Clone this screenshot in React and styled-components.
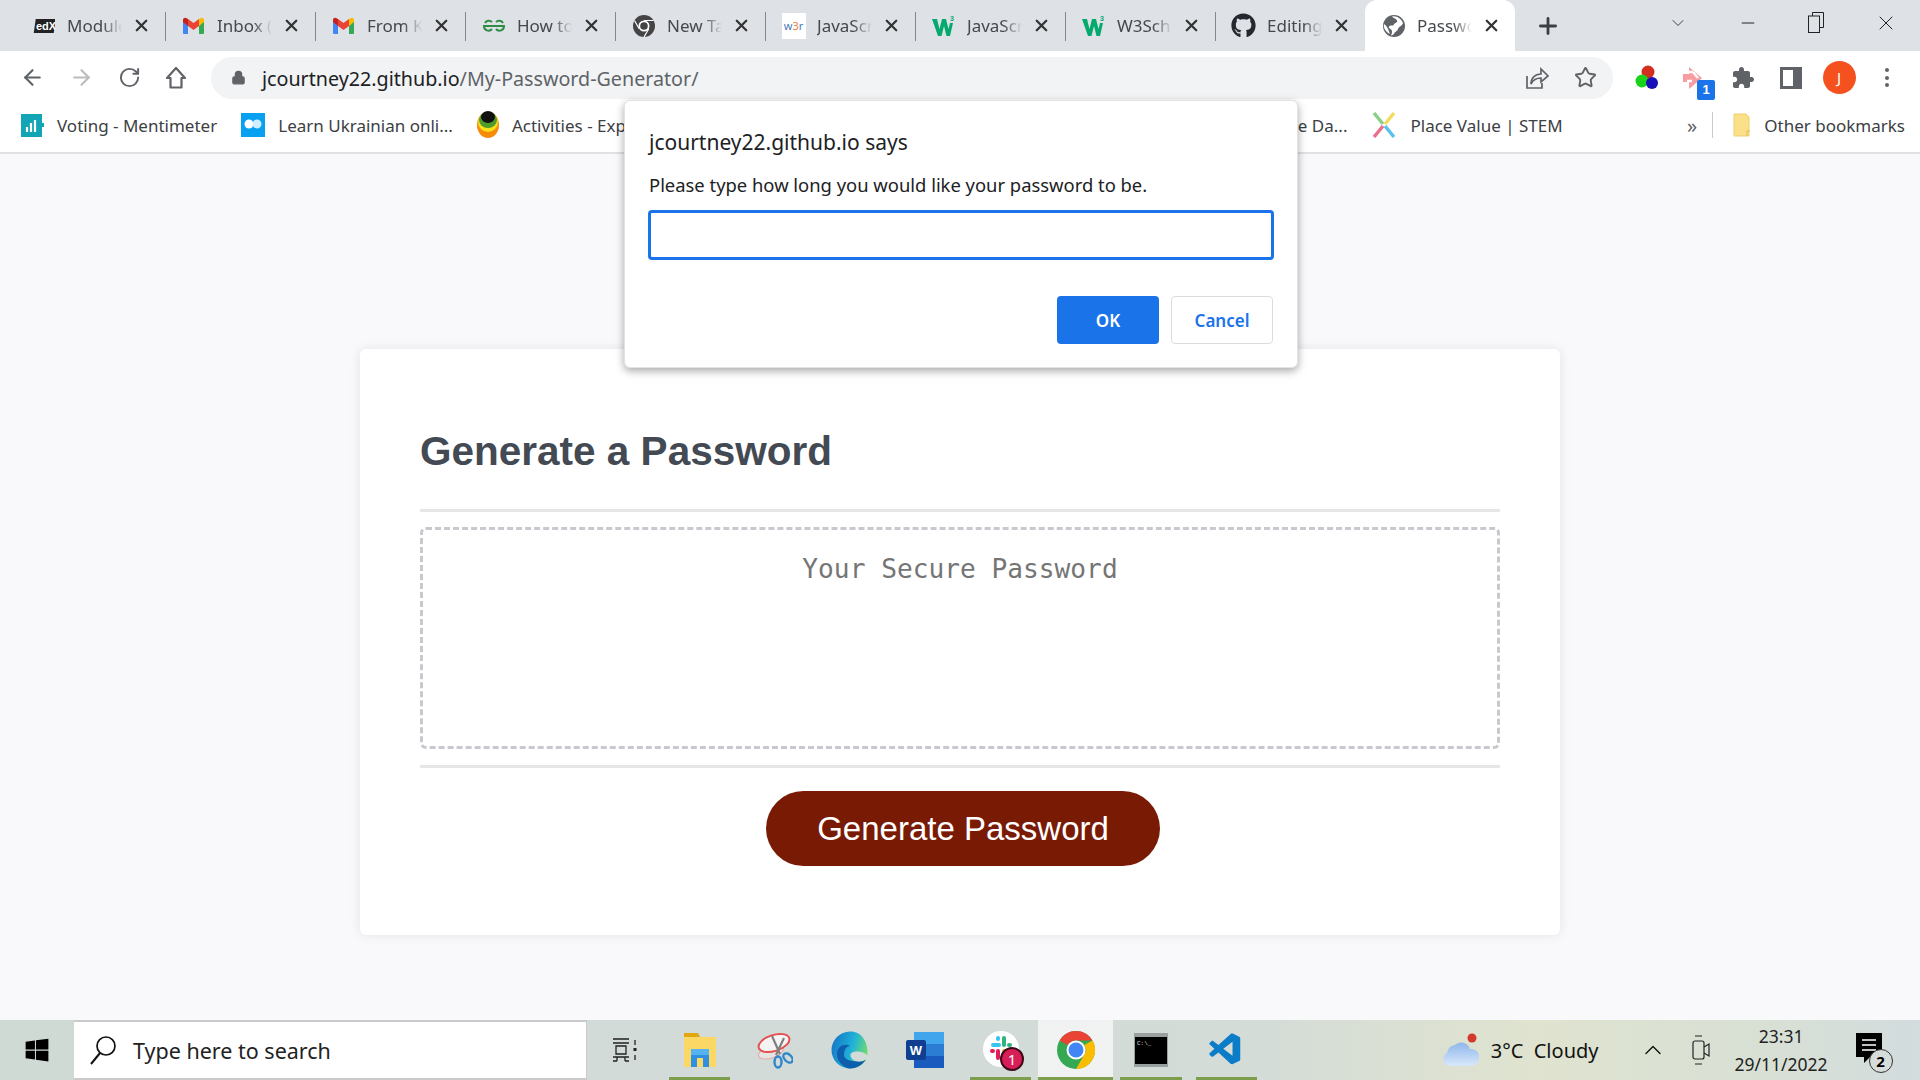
import React from "react";
import styled, { createGlobalStyle } from "styled-components";
import { FaGithub, FaWindows } from "react-icons/fa";
import { VscVscode } from "react-icons/vsc";
import { ArrowLeft, ArrowRight, RotateCw, Lock, Star, Plus, X, Minus, ChevronDown, ChevronUp } from "lucide-react";

const UI_FONT = `"Noto Sans", "Open Sans", sans-serif`;

const Global = createGlobalStyle`
  html, body { margin: 0; padding: 0; background: #f9f9fc; }
  * { box-sizing: border-box; }
`;

// --- small drawn icons ---
const EdxIcon = () => (
  <svg width="22" height="18" viewBox="0 0 22 18">
    <rect x="1" y="2" width="20" height="14" fill="#222" transform="skewX(-8) translate(2 0)" />
    <text x="3" y="13" fontSize="11" fontWeight="700" fill="#fff" fontFamily="Liberation Sans">edX</text>
  </svg>
);
const GmailIcon = () => (
  <svg width="23" height="18" viewBox="0 0 23 18">
    <path d="M1 4v12a1 1 0 0 0 1 1h4V8z" fill="#4285f4" />
    <path d="M22 4v12a1 1 0 0 1-1 1h-4V8z" fill="#34a853" />
    <path d="M17 2v7l5-4V3c0-2-2.4-3-4-1.500z" fill="#fbbc04" />
    <path d="M6 2v7l5.500 4L17 9V2l-5.500 4z" fill="#ea4335" />
    <path d="M6 2v7L1 5V3c0-2 2.4-3 4-1.500z" fill="#c5221f" />
  </svg>
);
const GfgIcon = () => (
  <svg width="24" height="14" viewBox="0 0 24 14" fill="none" stroke="#2f8d46" strokeWidth="2">
    <path d="M12 7H2a4.500 4.500 0 0 0 8 3M12 7h10a4.500 4.500 0 0 1-8 3M3 4a4.500 4.500 0 0 1 7-1M21 4a4.500 4.500 0 0 0-7-1" />
  </svg>
);
const ChromeMono = () => (
  <svg width="22" height="22" viewBox="0 0 22 22">
    <circle cx="11" cy="11" r="11" fill="#444" />
    <circle cx="11" cy="11" r="5.5" fill="#fff" />
    <circle cx="11" cy="11" r="3.8" fill="#444" />
    <path d="M11 5.500h9.500M6.200 13.800 1.600 5.800M15.800 13.800 11 22" stroke="#fff" strokeWidth="1.2" />
  </svg>
);
const W3rIcon = () => (
  <W3rBox>w<b>3</b>r</W3rBox>
);
const W3Icon = () => (
  <svg width="24" height="22" viewBox="0 0 24 22">
    <path d="M0 4h5l2.500 10L10 4h4l2.500 10L18 8h3l-3 13h-3.500L12 11l-2.500 10H6z" fill="#04aa6d" />
    <text x="18" y="6" fontSize="7" fontWeight="700" fill="#04aa6d" fontFamily="Liberation Sans">3</text>
  </svg>
);
const GlobeIcon = () => (
  <svg width="22" height="22" viewBox="0 0 22 22">
    <circle cx="11" cy="11" r="11" fill="#5f6368" />
    <path d="M9 1.500c2 2 4 2 5 4s-2 2-3 4-4 0-5 2 3 2 3 5-1 3-1 4c3 0 3-3 5-4s2-4 4-5 2-2 3-3c-1-4-6-8-11-7zM1 9c2 1 3 3 4 5s1 3 2 5C3 17 0 13 1 9z" fill="#fff" />
  </svg>
);
const RestoreIcon = () => (
  <svg width="16" height="21" viewBox="0 0 16 21" fill="none" stroke="#222">
    <path d="M4.500 4V.5h11v15H12" />
    <rect x="0.500" y="4" width="11" height="16.500" />
  </svg>
);
const HomeIcon = () => (
  <svg width="22" height="24" viewBox="0 0 22 24" fill="none" stroke="#5f6368" strokeWidth="2.200" strokeLinejoin="round">
    <path d="M11 2 2 12h3.500v9.500h11V12H20z" />
  </svg>
);
const ShareIcon = () => (
  <svg width="24" height="24" viewBox="0 0 24 24" fill="none" stroke="#5f6368" strokeWidth="1.700">
    <path d="M2 10v12h15v-5" />
    <path d="M6 18c0-6 4-10 10-10V3l7 7-7 6v-4c-4 0-8 2-10 6z" />
  </svg>
);
const PuzzleIcon = () => (
  <svg width="24" height="24" viewBox="0 0 24 24" fill="#5f6368">
    <path d="M20.500 11H19V7c0-1.100-.9-2-2-2h-4V3.500C13 2.120 11.880 1 10.500 1S8 2.120 8 3.500V5H4c-1.100 0-1.990.9-1.990 2v3.800H3.500c1.490 0 2.700 1.210 2.700 2.700s-1.210 2.700-2.700 2.700H2V20c0 1.100.9 2 2 2h3.800v-1.500c0-1.490 1.210-2.700 2.700-2.700 1.490 0 2.700 1.210 2.700 2.700V22H17c1.100 0 2-.9 2-2v-4h1.500c1.380 0 2.500-1.120 2.500-2.500S21.880 11 20.500 11z" />
  </svg>
);
const ColorDots = () => (
  <svg width="24" height="28" viewBox="0 0 24 28">
    <circle cx="13" cy="8" r="6.500" fill="#d32f1f" />
    <circle cx="7" cy="17" r="6.500" fill="#19d219" />
    <circle cx="17" cy="19" r="6" fill="#1a10b8" />
  </svg>
);
const ArrowExt = () => (
  <svg width="28" height="28" viewBox="0 0 28 28">
    <path d="M8 3l13 11-13 11v-7H2v-8h6z" fill="#f79ca0" />
    <path d="M7 8h5M6 17h5M12 8l5 6" stroke="#fff" strokeWidth="2.500" />
  </svg>
);
const SidePanel = () => (
  <svg width="22" height="22" viewBox="0 0 22 22">
    <rect x="1.500" y="1.500" width="19" height="19" fill="none" stroke="#5f6368" strokeWidth="3" />
    <rect x="13" y="2" width="7" height="18" fill="#5f6368" />
  </svg>
);
const MentiIcon = () => (
  <svg width="23" height="23" viewBox="0 0 23 23">
    <rect width="21" height="23" fill="#13a5b5" />
    <rect x="21" y="9" width="2" height="4" fill="#13a5b5" />
    <path d="M6 13v5M10 9v9M14 6v12" stroke="#fff" strokeWidth="2.200" />
  </svg>
);
const BubblesIcon = () => (
  <svg width="24" height="24" viewBox="0 0 24 24">
    <rect width="24" height="24" fill="#08a0f0" />
    <circle cx="8" cy="11" r="4.500" fill="#fff" />
    <circle cx="16" cy="11" r="4.500" fill="#cfeeff" />
  </svg>
);
const LayersIcon = () => (
  <svg width="22" height="28" viewBox="0 0 22 28">
    <ellipse cx="11" cy="14" rx="11" ry="13" fill="#f58a0b" />
    <ellipse cx="11" cy="11" rx="10" ry="10" fill="#f7e11a" />
    <ellipse cx="11" cy="9" rx="9" ry="8" fill="#4f9b2c" />
    <ellipse cx="11" cy="6" rx="7" ry="6" fill="#111" />
  </svg>
);
const StemIcon = () => (
  <svg width="26" height="28" viewBox="0 0 26 28" fill="none" strokeWidth="3.500">
    <path d="M3 2l9 11" stroke="#8ad08a" />
    <path d="M23 2l-9 11" stroke="#f2dc62" />
    <path d="M3 26l9-11" stroke="#ea6f8c" />
    <path d="M23 26l-9-11" stroke="#5cc1ea" />
  </svg>
);
const FolderIcon = () => (
  <svg width="18" height="24" viewBox="0 0 18 24">
    <path d="M1 1h12l3 3v19H1z" fill="#fbe08a" stroke="#f0cf6c" />
    <path d="M14 23v-5h3" fill="none" stroke="#e2b94c" />
  </svg>
);
const SearchGlass = () => (
  <svg width="28" height="30" viewBox="0 0 28 30" fill="none" stroke="#111" strokeWidth="1.700">
    <circle cx="17" cy="11" r="9" />
    <path d="M11 18 2 29" strokeWidth="2" />
  </svg>
);
const TaskViewIcon = () => (
  <svg width="26" height="24" viewBox="0 0 26 24" fill="none" stroke="#222" strokeWidth="1.300">
    <path d="M1 1h16M1 5h16M4 8h10v8H4zM1 19h16M1 23h4M13 23h4M5 19v4M13 19v4M23 2v5M23 17v5" />
    <rect x="21.500" y="10" width="3" height="3" fill="#222" stroke="none" />
  </svg>
);
const ExplorerIcon = () => (
  <svg width="34" height="36" viewBox="0 0 34 36">
    <path d="M1 1h14l2 4H1z" fill="#e2a70f" />
    <path d="M1 5h32v30H1z" fill="#fbd766" />
    <path d="M8 17h18v18h-6v-9h-6v9H8z" fill="#2f8fe0" />
    <path d="M8 17h18v6H8z" fill="#55b3f2" />
  </svg>
);
const SnipIcon = () => (
  <svg width="36" height="38" viewBox="0 0 36 38" fill="none">
    <ellipse cx="14" cy="21" rx="13" ry="6" fill="#e4e4e4" stroke="#e9a8a8" transform="rotate(-18 14 21)" />
    <ellipse cx="17" cy="12" rx="16" ry="8" fill="#f4f4f4" stroke="#e55050" strokeWidth="2" transform="rotate(-18 17 12)" />
    <path d="M15 5l8 18M27 7 19 24" stroke="#808080" strokeWidth="2.200" />
    <ellipse cx="21" cy="31" rx="3.500" ry="5.500" stroke="#2f86cc" strokeWidth="2.400" />
    <ellipse cx="31" cy="27" rx="3.500" ry="5.500" stroke="#2f86cc" strokeWidth="2.400" transform="rotate(-45 31 27)" />
  </svg>
);
const EdgeIcon = () => (
  <svg width="38" height="38" viewBox="0 0 38 38">
    <defs>
      <linearGradient id="edgeA" x1="0" y1="0.300" x2="1" y2="0.600">
        <stop offset="0" stopColor="#1478c8" />
        <stop offset="0.550" stopColor="#1fb1d8" />
        <stop offset="1" stopColor="#74df6a" />
      </linearGradient>
    </defs>
    <path d="M19 .5C9 .5.5 9 .5 19c0 10 8 18.500 18.500 18.500 7 0 13-3.500 16-9-3 2-6 2.500-9 2-4-1-7-4-6.500-7 .5-2 3-3 6-3 6 0 9 2 11 4C37.500 11 31 .5 19 .5z" fill="url(#edgeA)" />
    <path d="M13 24c0-6 3-9 6-9-5-3-13 0-13 8 0 8 7 14.500 13 14.500 6 0 12-3 16-9-3 2-6 2.500-9 2-6-.5-13-1.500-13-6.500z" fill="#0d5fae" />
  </svg>
);
const WordIcon = () => (
  <svg width="38" height="36" viewBox="0 0 38 36">
    <rect x="8" y="0" width="30" height="12" fill="#41a5ee" />
    <rect x="8" y="12" width="30" height="12" fill="#2b7cd3" />
    <rect x="8" y="24" width="30" height="12" fill="#185abd" />
    <rect x="0" y="8" width="20" height="20" rx="2" fill="#103f91" />
    <text x="10" y="23" fontSize="13" fontWeight="700" fill="#fff" textAnchor="middle" fontFamily="Liberation Sans">W</text>
  </svg>
);
const SlackIcon = () => (
  <svg width="36" height="40" viewBox="0 0 36 40">
    <circle cx="18" cy="19" r="18" fill="#fff" />
    <path d="M10 15h6M15 8v1" stroke="#36c5f0" strokeWidth="4" strokeLinecap="round" />
    <path d="M21 8v7M27 15h-1" stroke="#2eb67d" strokeWidth="4" strokeLinecap="round" />
    <path d="M15 21v7M9 21h1" stroke="#e01e5a" strokeWidth="4" strokeLinecap="round" />
    <path d="M21 21h6" stroke="#ecb22e" strokeWidth="4" strokeLinecap="round" />
  </svg>
);
const ChromeColor = () => (
  <svg width="38" height="38" viewBox="0 0 38 38">
    <circle cx="19" cy="19" r="19" fill="#34a853" />
    <path d="M19 0a19 19 0 0 1 16.500 9.500H19a9.500 9.500 0 0 0-8.200 4.800L2.600 9.500A19 19 0 0 1 19 0z" fill="#ea4335" />
    <path d="M35.500 9.500A19 19 0 0 1 19 38l8.200-14.200A9.500 9.500 0 0 0 27.200 14z" fill="#fbbc04" />
    <circle cx="19" cy="19" r="9.500" fill="#fff" />
    <circle cx="19" cy="19" r="7.500" fill="#4285f4" />
  </svg>
);
const TerminalIcon = () => (
  <svg width="34" height="34" viewBox="0 0 34 34">
    <rect width="34" height="34" fill="#9aa0a0" />
    <rect x="1" y="4" width="32" height="27" fill="#000" />
    <text x="3" y="12" fontSize="6" fill="#ddd" fontFamily="Liberation Mono">C:\_</text>
  </svg>
);
const CloudIcon = () => (
  <svg width="38" height="34" viewBox="0 0 38 34">
    <defs>
      <linearGradient id="cloudA" x1="0" y1="0" x2="0" y2="1">
        <stop offset="0" stopColor="#8fb6ea" />
        <stop offset="1" stopColor="#d9e8fb" />
      </linearGradient>
    </defs>
    <path d="M8 33a7 7 0 0 1-2-13 9 9 0 0 1 8-8 9 9 0 0 1 15 4 8.500 8.500 0 0 1 2 17z" fill="url(#cloudA)" />
    <circle cx="31" cy="5" r="4.500" fill="#d23a2d" />
  </svg>
);
const MeetIcon = () => (
  <svg width="18" height="32" viewBox="0 0 18 32" fill="none" stroke="#222" strokeWidth="1.200">
    <rect x="1" y="7" width="11" height="18" rx="2" />
    <path d="M12 13l5-3v12l-5-3M3 2h7M3 30h7" />
  </svg>
);
const NotifyIcon = () => (
  <svg width="26" height="34" viewBox="0 0 26 34">
    <path d="M0 0h26v24H14l-6 6v-6H0z" fill="#000" />
    <path d="M6 7h14M6 12h14M6 17h14" stroke="#fff" strokeWidth="1.500" />
  </svg>
);

// --- data ---
const tabs = [
  { title: "Module", icon: <EdxIcon /> },
  { title: "Inbox (", icon: <GmailIcon /> },
  { title: "From K", icon: <GmailIcon /> },
  { title: "How to", icon: <GfgIcon /> },
  { title: "New Ta", icon: <ChromeMono /> },
  { title: "JavaScr", icon: <W3rIcon /> },
  { title: "JavaScr", icon: <W3Icon /> },
  { title: "W3Sch", icon: <W3Icon /> },
  { title: "Editing", icon: <FaGithub size={25} color="#24292f" /> },
  { title: "Passwo", icon: <GlobeIcon />, active: true },
];

const taskItems = [
  { icon: <TaskViewIcon /> },
  { icon: <ExplorerIcon />, open: true },
  { icon: <SnipIcon /> },
  { icon: <EdgeIcon /> },
  { icon: <WordIcon /> },
  { icon: <SlackIcon />, open: true, badge: "1" },
  { icon: <ChromeColor />, open: true, active: true },
  { icon: <TerminalIcon />, open: true },
  { icon: <VscVscode size={38} color="#0a7cc8" />, open: true },
];

export default function App() {
  return (
    <Screen>
      <Global />
      <TabStrip>
        {tabs.map((t, i) => (
          <Tab key={i} $active={t.active} $last={i >= 8}>
            <TabIcon>{t.icon}</TabIcon>
            <TabTitle>{t.title}</TabTitle>
            <X size={19} strokeWidth={2.8} color="#333" />
          </Tab>
        ))}
        <NewTab><Plus size={26} strokeWidth={2.6} color="#3c4043" /></NewTab>
        <WindowButtons>
          <ChevronDown size={20} strokeWidth={1} color="#222" />
          <Minus size={20} strokeWidth={1.2} color="#222" />
          <RestoreIcon />
          <X size={24} strokeWidth={1} color="#222" />
        </WindowButtons>
      </TabStrip>

      <Toolbar>
        <NavButtons>
          <ArrowLeft size={25} color="#5f6368" strokeWidth={2} />
          <ArrowRight size={25} color="#babcbe" strokeWidth={2} />
          <RotateCw size={23} color="#5f6368" strokeWidth={2} />
          <HomeIcon />
        </NavButtons>
        <AddressBar>
          <Lock size={15} color="#5f6368" fill="#5f6368" />
          <Url>jcourtney22.github.io<UrlPath>/My-Password-Generator/</UrlPath></Url>
          <AddressActions>
            <ShareIcon />
            <Star size={23} color="#5f6368" strokeWidth={2} />
          </AddressActions>
        </AddressBar>
        <Extensions>
          <ColorDots />
          <ExtBadgeWrap>
            <ArrowExt />
            <ExtBadge>1</ExtBadge>
          </ExtBadgeWrap>
          <PuzzleIcon />
          <SidePanel />
          <Avatar>J</Avatar>
          <MenuDots><i /><i /><i /></MenuDots>
        </Extensions>
      </Toolbar>

      <BookmarkBar>
        <Bookmark><MentiIcon />Voting - Mentimeter</Bookmark>
        <Bookmark><BubblesIcon />Learn Ukrainian onli...</Bookmark>
        <Bookmark><LayersIcon />Activities - Explore</Bookmark>
        <CoveredBookmark>The Da...</CoveredBookmark>
        <Bookmark><StemIcon />Place Value | STEM</Bookmark>
        <More>»</More>
        <BookmarkDivider />
        <Bookmark><FolderIcon />Other bookmarks</Bookmark>
      </BookmarkBar>

      <Page>
        <Card>
          <CardHeader>
            <Title>Generate a Password</Title>
          </CardHeader>
          <CardBody>
            <PasswordBox placeholder="Your Secure Password" readOnly />
          </CardBody>
          <CardFooter>
            <GenerateButton>Generate Password</GenerateButton>
          </CardFooter>
        </Card>
      </Page>

      <Taskbar>
        <StartButton><FaWindows size={26} color="#000" /></StartButton>
        <SearchBox>
          <SearchGlass />
          <SearchText>Type here to search</SearchText>
        </SearchBox>
        {taskItems.map((item, i) => (
          <TaskSlot key={i} $open={item.open} $active={item.active}>
            {item.icon}
            {item.badge && <TaskBadge>{item.badge}</TaskBadge>}
          </TaskSlot>
        ))}
        <Tray>
          <Weather><CloudIcon /><span>3°C&nbsp; Cloudy</span></Weather>
          <TraySlot $gap={40}><ChevronUp size={28} strokeWidth={1.2} color="#111" /></TraySlot>
          <TraySlot $gap={25}><MeetIcon /></TraySlot>
          <Clock><span>23:31</span><span>29/11/2022</span></Clock>
          <NotifyWrap>
            <NotifyIcon />
            <NotifyCount>2</NotifyCount>
          </NotifyWrap>
        </Tray>
      </Taskbar>

      <Dialog>
        <DialogTitle>jcourtney22.github.io says</DialogTitle>
        <DialogMessage>Please type how long you would like your password to be.</DialogMessage>
        <DialogInput />
        <DialogActions>
          <OkButton>OK</OkButton>
          <CancelButton>Cancel</CancelButton>
        </DialogActions>
      </Dialog>
    </Screen>
  );
}

const Screen = styled.div`
  position: relative;
  width: 1920px;
  height: 1080px;
  overflow: hidden;
  display: flex;
  flex-direction: column;
  font-family: ${UI_FONT};
  background: #f9f9fc;
`;

const TabStrip = styled.div`
  height: 51px;
  flex: none;
  display: flex;
  align-items: stretch;
  padding-left: 15px;
  background: #dee1e6;
`;

const Tab = styled.div`
  position: relative;
  width: 150px;
  flex: none;
  display: flex;
  align-items: center;
  padding: 0 0 0 16px;
  color: #45484c;
  background: ${(p) => (p.$active ? "#fff" : "transparent")};
  border-radius: ${(p) => (p.$active ? "12px 12px 0 0" : "0")};
  &::after {
    content: "";
    position: absolute;
    right: -1px;
    top: 12px;
    bottom: 10px;
    width: 1px;
    background: ${(p) => (p.$last ? "transparent" : "#84878b")};
  }
`;

const TabIcon = styled.span`
  width: 25px;
  flex: none;
  display: flex;
  justify-content: center;
  align-items: center;
`;

const TabTitle = styled.span`
  width: 60px;
  margin-left: 11px;
  margin-right: 5px;
  flex: none;
  overflow: hidden;
  white-space: nowrap;
  font-size: 17px;
  -webkit-mask-image: linear-gradient(90deg, #000 60%, transparent 92%);
  mask-image: linear-gradient(90deg, #000 60%, transparent 92%);
`;

const W3rBox = styled.span`
  width: 24px;
  height: 26px;
  background: #fff;
  font-size: 11px;
  line-height: 26px;
  text-align: center;
  color: #4a7ab8;
  b { color: #e8823a; font-weight: 400; }
`;

const NewTab = styled.div`
  width: 66px;
  display: flex;
  align-items: center;
  justify-content: center;
`;

const WindowButtons = styled.div`
  margin-left: auto;
  width: 252px;
  padding-bottom: 6px;
  padding-right: 22px;
  display: flex;
  align-items: center;
  justify-content: space-between;
`;

const Toolbar = styled.div`
  height: 51px;
  flex: none;
  display: flex;
  align-items: center;
  background: #fff;
`;

const NavButtons = styled.div`
  width: 211px;
  flex: none;
  padding: 2px 24px 0 20px;
  display: flex;
  align-items: center;
  justify-content: space-between;
`;

const AddressBar = styled.div`
  width: 1402px;
  height: 42px;
  flex: none;
  margin-top: 2px;
  padding: 0 16px 0 20px;
  display: flex;
  align-items: center;
  border-radius: 21px;
  background: #f1f3f4;
`;

const Url = styled.span`
  margin-left: 16px;
  padding-top: 2px;
  font-size: 19.7px;
  color: #202124;
  white-space: nowrap;
`;

const UrlPath = styled.span`
  color: #5f6368;
`;

const AddressActions = styled.div`
  margin-left: auto;
  width: 72px;
  display: flex;
  justify-content: space-between;
  align-items: center;
`;

const Extensions = styled.div`
  flex: 1;
  padding: 2px 0 0 10px;
  display: grid;
  grid-auto-flow: column;
  grid-auto-columns: 48px;
  justify-content: start;
  justify-items: center;
  align-items: center;
`;

const ExtBadgeWrap = styled.span`
  position: relative;
  display: flex;
`;

const ExtBadge = styled.span`
  position: absolute;
  right: -6px;
  bottom: -8px;
  width: 18px;
  height: 20px;
  border-radius: 2px;
  background: #1a73e8;
  color: #fff;
  font: 700 13px/20px "Liberation Sans", sans-serif;
  text-align: center;
`;

const Avatar = styled.span`
  width: 33px;
  height: 33px;
  border-radius: 50%;
  background: #f4511e;
  color: #fff;
  font-size: 15px;
  line-height: 33px;
  text-align: center;
`;

const MenuDots = styled.span`
  display: flex;
  flex-direction: column;
  gap: 3.5px;
  i {
    width: 4px;
    height: 4px;
    border-radius: 50%;
    background: #5f6368;
  }
`;

const BookmarkBar = styled.div`
  height: 52px;
  flex: none;
  padding: 0 15px 4px 21px;
  display: flex;
  align-items: center;
  gap: 24px;
  background: #fff;
  border-bottom: 2px solid #dfe1e4;
`;

const Bookmark = styled.span`
  display: flex;
  align-items: center;
  gap: 13px;
  font-size: 17px;
  color: #3c4043;
  white-space: nowrap;
`;

// sits behind the dialog except for its last few letters
const CoveredBookmark = styled.span`
  margin-left: 597px;
  font-size: 17px;
  color: #3c4043;
  white-space: nowrap;
`;

const More = styled.span`
  margin-left: auto;
  font-size: 20px;
  color: #5f6368;
`;

const BookmarkDivider = styled.span`
  width: 1px;
  height: 26px;
  margin: 0 -4px 0 -9px;
  background: #c8cacc;
`;

const Page = styled.main`
  flex: 1;
  padding-top: 195px;
  display: flex;
  justify-content: center;
  align-items: flex-start;
  background: #f9f9fc;
`;

const Card = styled.section`
  width: 1200px;
  height: 586px;
  padding: 0 60px;
  background: #fff;
  border-radius: 6px;
  box-shadow: 0 0 12px rgba(0, 0, 0, 0.09);
`;

const CardHeader = styled.header`
  height: 163px;
  display: flex;
  align-items: center;
  border-bottom: 3px solid #e6e6e9;
`;

const Title = styled.h2`
  margin: 0;
  padding-top: 44px;
  font: 700 40.5px "Liberation Sans", Arial, sans-serif;
  color: #434a54;
`;

const CardBody = styled.div`
  height: 256px;
  padding-top: 15px;
  border-bottom: 3px solid #e6e6e9;
`;

const PasswordBox = styled.textarea`
  display: block;
  width: 100%;
  height: 222px;
  padding: 24px;
  resize: none;
  border: 3px dashed #c8c8cf;
  border-radius: 6px;
  outline: none;
  text-align: center;
  font: 26.2px/1.2 "DejaVu Sans Mono", monospace;
  &::placeholder {
    color: #757575;
  }
`;

const CardFooter = styled.footer`
  padding-top: 23px;
  padding-left: 6px;
  display: flex;
  justify-content: center;
`;

const GenerateButton = styled.button`
  width: 394px;
  height: 75px;
  border: none;
  border-radius: 38px;
  background: #791a05;
  color: #fff;
  font: 400 33px "Liberation Sans", Arial, sans-serif;
`;

const Taskbar = styled.footer`
  height: 60px;
  flex: none;
  display: flex;
  align-items: stretch;
  background: linear-gradient(90deg, #cfdad4 0%, #d3dbd8 45%, #d4dcd8 65%, #dfe3cf 80%, #d8e0d5 92%, #d3dcde 100%);
`;

const StartButton = styled.div`
  width: 74px;
  flex: none;
  display: flex;
  align-items: center;
  justify-content: center;
`;

const SearchBox = styled.div`
  width: 513px;
  flex: none;
  padding-left: 15px;
  display: flex;
  align-items: center;
  gap: 16px;
  background: #fff;
  border: 2px solid #cacaca;
  border-width: 2px 1px 2px 0;
`;

const SearchText = styled.span`
  font-size: 21.5px;
  color: #222;
`;

const TaskSlot = styled.div`
  position: relative;
  width: 75.2px;
  flex: none;
  display: flex;
  align-items: center;
  justify-content: center;
  background: ${(p) => (p.$active ? "rgba(255, 255, 255, 0.65)" : "transparent")};
  &::after {
    content: "";
    display: ${(p) => (p.$open ? "block" : "none")};
    position: absolute;
    left: ${(p) => (p.$active ? "0" : "7px")};
    right: ${(p) => (p.$active ? "0" : "7px")};
    bottom: 0;
    height: 3px;
    background: #7d9e4c;
  }
`;

const TaskBadge = styled.span`
  position: absolute;
  left: 37px;
  top: 27px;
  width: 24px;
  height: 24px;
  border-radius: 50%;
  border: 2px solid #3d0a1b;
  background: #d81e56;
  color: #fff;
  font-size: 15px;
  line-height: 20px;
  text-align: center;
`;

const Tray = styled.div`
  flex: 1;
  padding-left: 177px;
  display: flex;
  align-items: center;
`;

const TraySlot = styled.span`
  display: flex;
  margin-left: ${(p) => p.$gap}px;
`;

const Weather = styled.div`
  display: flex;
  align-items: center;
  gap: 12px;
  font-size: 20px;
  color: #111;
`;

const Clock = styled.div`
  margin-left: 25px;
  display: flex;
  flex-direction: column;
  align-items: center;
  gap: 4px;
  font-size: 17.5px;
  line-height: 24px;
  color: #222;
`;

const NotifyWrap = styled.span`
  position: relative;
  margin-left: 28px;
  display: flex;
`;

const NotifyCount = styled.span`
  position: absolute;
  right: -11px;
  bottom: -6px;
  width: 24px;
  height: 24px;
  border-radius: 50%;
  border: 1px solid #333;
  background: #d5dcd9;
  font-size: 15px;
  font-weight: 700;
  line-height: 22px;
  text-align: center;
`;

const Dialog = styled.div`
  position: absolute;
  left: 624px;
  top: 100px;
  width: 674px;
  height: 268px;
  padding: 26px 24px 24px;
  background: #fff;
  border: 1px solid #e3e3e3;
  border-radius: 6px;
  box-shadow: 0 3px 8px rgba(0, 0, 0, 0.35);
`;

const DialogTitle = styled.div`
  font-size: 21px;
  line-height: 30px;
  color: #202124;
`;

const DialogMessage = styled.div`
  margin-top: 15px;
  font-size: 18.4px;
  line-height: 26px;
  color: #202124;
`;

const DialogInput = styled.div`
  height: 50px;
  margin: 12px -1px 0;
  border: 3px solid #1a73e8;
  border-radius: 4px;
`;

const DialogActions = styled.div`
  margin-top: 36px;
  display: flex;
  justify-content: flex-end;
  gap: 12px;
`;

const OkButton = styled.button`
  width: 102px;
  height: 48px;
  border: none;
  border-radius: 4px;
  background: #1a73e8;
  color: #fff;
  font: 600 17px ${UI_FONT};
`;

const CancelButton = styled.button`
  width: 102px;
  height: 48px;
  border: 1px solid #dadce0;
  border-radius: 4px;
  background: #fff;
  color: #1a73e8;
  font: 600 17px ${UI_FONT};
`;
